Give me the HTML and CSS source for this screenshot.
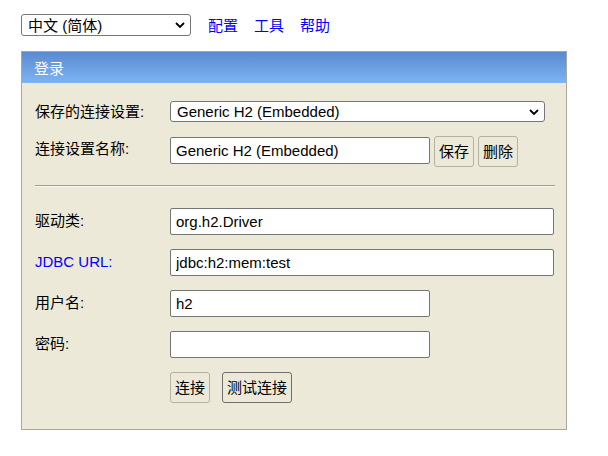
FILE: index.html
```html
<!DOCTYPE html>
<html lang="zh-CN">
    <head>
        <meta charset="UTF-8">
        <meta name="viewport" content="width=device-width, initial-scale=1.0">
        <title>H2 Console</title>
        <link rel="stylesheet" href="styles.css">
    </head>
    <body>
        <div class="toolbar">
            <span class="select-wrap lang-wrap">
                <select class="select">
                    <option>中文 (简体)</option>
                </select>
                <svg class="chevron" width="10" height="6" viewBox="0 0 10 6"><path d="M1 1l4 4 4-4" fill="none" stroke="#000" stroke-width="1.8"/></svg>
            </span>
            <nav class="toolbar-links">
                <a href="#">配置</a>
                <a href="#">工具</a>
                <a href="#">帮助</a>
            </nav>
        </div>

        <div class="login">
            <div class="login-title">登录</div>
            <div class="login-body">
                <div class="row row-first">
                    <label class="field-label">保存的连接设置:</label>
                    <span class="select-wrap setting-wrap">
                        <select class="select">
                            <option>Generic H2 (Embedded)</option>
                        </select>
                        <svg class="chevron" width="10" height="6" viewBox="0 0 10 6"><path d="M1 1l4 4 4-4" fill="none" stroke="#000" stroke-width="1.8"/></svg>
                    </span>
                </div>
                <div class="row">
                    <label class="field-label">连接设置名称:</label>
                    <div class="field-group">
                        <input type="text" class="field field-short" value="Generic H2 (Embedded)">
                        <button class="btn">保存</button>
                        <button class="btn">删除</button>
                    </div>
                </div>

                <hr class="divider">

                <div class="row">
                    <label class="field-label">驱动类:</label>
                    <input type="text" class="field field-long" value="org.h2.Driver">
                </div>
                <div class="row">
                    <a href="#" class="field-label label-link">JDBC URL:</a>
                    <input type="text" class="field field-long" value="jdbc:h2:mem:test">
                </div>
                <div class="row">
                    <label class="field-label">用户名:</label>
                    <input type="text" class="field field-short" value="h2">
                </div>
                <div class="row">
                    <label class="field-label">密码:</label>
                    <input type="password" class="field field-short" value="">
                </div>
                <div class="row actions">
                    <button class="btn">连接</button>
                    <button class="btn btn-default">测试连接</button>
                </div>
            </div>
        </div>
    </body>
</html>
```

FILE: styles.css
```css
* {
    margin: 0;
    padding: 0;
    box-sizing: border-box;
}

body {
    background-color: #fff;
    color: #000;
    font-family: 'Liberation Sans', Arial, 'Noto Sans CJK SC', sans-serif;
    font-size: 15px;
    line-height: 17px;
    padding: 14px 0 0 21px;
}

.toolbar {
    display: flex;
    align-items: center;
    height: 22px;
}

/* custom select with chevron drawn over it */
.select-wrap {
    position: relative;
    display: inline-block;
}

.select {
    -webkit-appearance: none;
    appearance: none;
    display: block;
    width: 100%;
    height: 100%;
    font: inherit;
    color: #000;
    border: 1px solid #767676;
    border-radius: 3px;
    background-color: #fff;
    padding: 0 20px 0 6px;
}

.chevron {
    position: absolute;
    top: 50%;
    right: 6px;
    margin-top: -3px;
    pointer-events: none;
}

.lang-wrap {
    width: 170px;
    height: 22px;
}

.setting-wrap {
    width: 375px;
    height: 21px;
}

.toolbar-links {
    display: flex;
    gap: 16px;
    margin-left: 17px;
}

.toolbar-links a {
    color: #00f;
    text-decoration: none;
}

.login {
    width: 546px;
    margin-top: 15px;
    border: 1px solid #aca899;
    background-color: #ece9d8;
}

.login-title {
    height: 31px;
    padding: 8px 12px 0;
    color: #fff;
    background: linear-gradient(to bottom, #5a8ad0, #7cb4f4);
}

.login-body {
    padding: 18px 12px 26px 13px;
}

.row {
    display: flex;
    align-items: flex-start;
    margin-top: 14px;
}

.row-first {
    margin-top: 0;
    align-items: center;
}

.field-label {
    width: 135px;
    flex: 0 0 135px;
    padding-top: 4px;
}

.row-first .field-label {
    padding-top: 0;
}

.label-link {
    color: #00f;
    text-decoration: none;
}

.field-group {
    display: flex;
    align-items: flex-start;
    gap: 4px;
}

.field-group .field {
    margin-top: 1px;
}

.field {
    height: 27px;
    font: inherit;
    border: 1px solid #767676;
    border-radius: 2px;
    background-color: #fff;
    padding: 0 5px;
    outline: none;
}

.field-long {
    width: 385px;
}

.field-short {
    width: 260px;
}

.divider {
    border: none;
    border-top: 1px solid #9d9b92;
    border-bottom: 1px solid #faf9f4;
    margin: 18px 0 21px;
    width: 520px;
}

.btn {
    height: 31px;
    padding: 0 4px;
    font: inherit;
    color: #000;
    background-color: transparent;
    border: 1px solid #b4b1a5;
    border-radius: 3px;
}

.btn-default {
    border-color: #6f6f6f;
}

.actions {
    padding-left: 135px;
    gap: 12px;
}
```
